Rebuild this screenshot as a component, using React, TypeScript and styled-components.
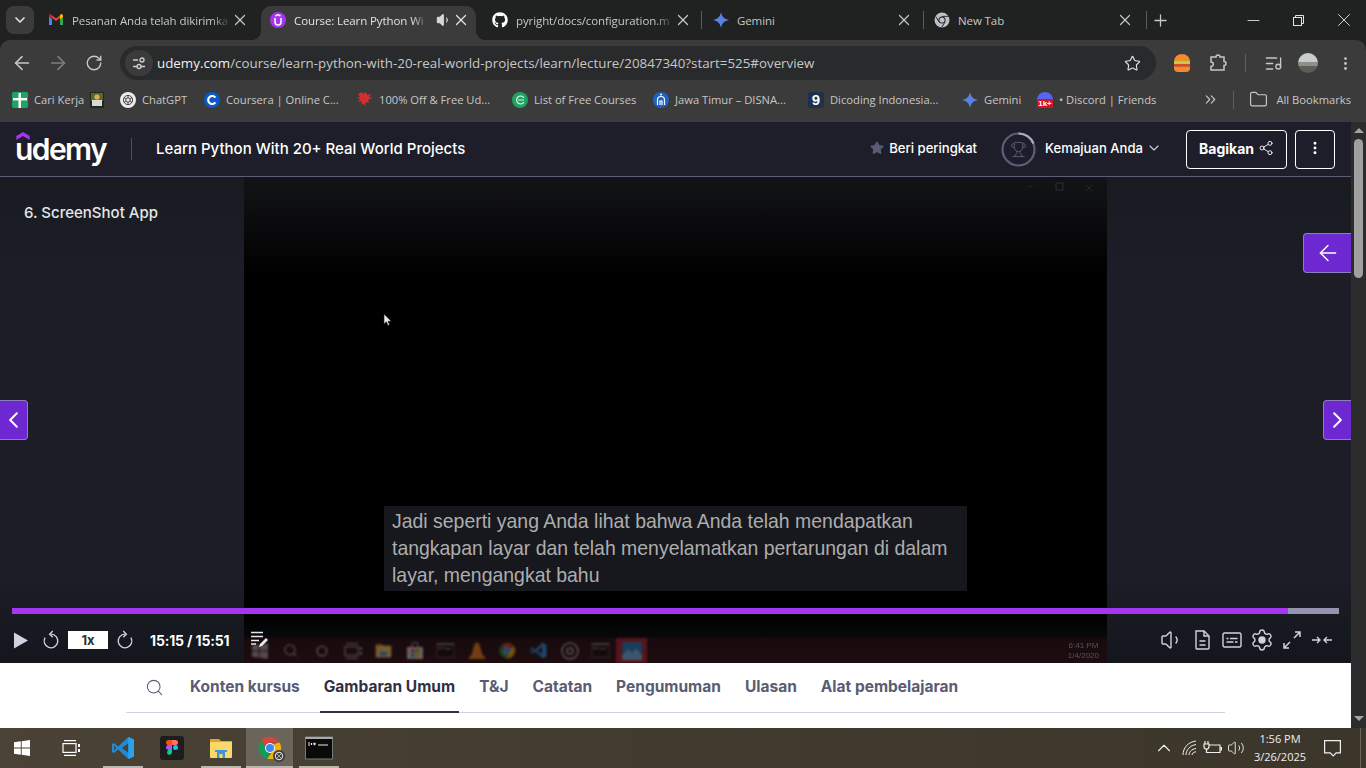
import styled, { createGlobalStyle } from "styled-components";
import {
  ArrowLeft,
  ArrowRight,
  ChevronDown,
  ChevronLeft,
  ChevronRight,
  ChevronUp,
  ChevronsRight,
  EllipsisVertical,
  Folder,
  ListMusic,
  Minus,
  Plus,
  RotateCw,
  Search,
  Settings,
  Share2,
  Star,
  Trophy,
  Volume1,
  Volume2,
  X,
} from "lucide-react";
import { FaGithub } from "react-icons/fa";

const GlobalStyle = createGlobalStyle`
  html, body {
    margin: 0;
    padding: 0;
    width: 1366px;
    height: 768px;
    overflow: hidden;
    background: #202121;
  }
  * { box-sizing: border-box; }
`;

const chromeFont = `"Open Sans", "Noto Sans", sans-serif`;
const udemyFont = `Inter, "Noto Sans", sans-serif`;

// Chrome window
const Screen = styled.div`
  width: 1366px;
  height: 768px;
  display: flex;
  flex-direction: column;
  font-family: ${chromeFont};
`;

const TabStrip = styled.div`
  height: 40px;
  flex: none;
  display: flex;
  align-items: flex-end;
  background: #202121;
  padding-left: 6px;
`;

const TabListButton = styled.div`
  width: 28px;
  height: 28px;
  margin: 0 7px 6px 0;
  border-radius: 8px;
  background: #3b3b3b;
  color: #e3e3e3;
  display: flex;
  align-items: center;
  justify-content: center;
`;

const Tab = styled.div<{ $w: number; $pad: number; $padR?: number; $active?: boolean }>`
  position: relative;
  width: ${(p) => p.$w}px;
  height: 34px;
  flex: none;
  display: flex;
  align-items: center;
  gap: 8px;
  padding: 0 ${(p) => p.$padR ?? 12}px 6px ${(p) => p.$pad}px;
  border-radius: 10px 10px 0 0;
  background: ${(p) => (p.$active ? "#3b3b3b" : "transparent")};
  color: ${(p) => (p.$active ? "#e3e3e3" : "#c7c7c7")};
  font-size: 11.5px;
  letter-spacing: -0.1px;

  ${(p) =>
    p.$active &&
    `
    &::before, &::after {
      content: "";
      position: absolute;
      bottom: 0;
      width: 10px;
      height: 10px;
    }
    &::before {
      left: -10px;
      background: radial-gradient(circle at 0 0, transparent 10px, #3b3b3b 10.5px);
    }
    &::after {
      right: -10px;
      background: radial-gradient(circle at 100% 0, transparent 10px, #3b3b3b 10.5px);
    }
  `}
`;

const TabTitle = styled.span<{ $fade?: boolean }>`
  flex: 1;
  min-width: 0;
  white-space: nowrap;
  ${(p) =>
    p.$fade &&
    `mask-image: linear-gradient(to right, #000 88%, transparent 100%);`}
`;

const TabClose = styled.span`
  width: 18px;
  height: 18px;
  flex: none;
  display: flex;
  margin-left: -8px;
`;

const TabAudio = styled.span`
  display: flex;
  color: #d8d8d8;
  svg {
    fill: currentColor;
  }
`;

const TabSep = styled.div<{ $ml?: number }>`
  width: 1px;
  height: 18px;
  flex: none;
  margin: 0 0 11px ${(p) => p.$ml ?? 0}px;
  background: #5a5c5e;
`;

const NewTab = styled.div`
  margin: 0 0 10px 4px;
  color: #c7c7c7;
  display: flex;
`;

const WindowButtons = styled.div`
  margin-left: auto;
  display: flex;
  align-self: flex-start;
  color: #e3e3e3;
`;

const WindowButton = styled.div`
  width: 45px;
  height: 40px;
  display: flex;
  align-items: center;
  justify-content: center;
`;

const Toolbar = styled.div`
  height: 42px;
  flex: none;
  display: flex;
  align-items: center;
  background: #3b3b3b;
  border-radius: 10px 10px 0 0;
  padding: 4px 0 0 4px;
  color: #c7c7c7;
`;

const NavIcon = styled.div<{ $dim?: boolean; $w?: number }>`
  width: ${(p) => p.$w ?? 36}px;
  height: 34px;
  flex: none;
  display: flex;
  align-items: center;
  justify-content: center;
  color: ${(p) => (p.$dim ? "#7d7f80" : "#c7c7c7")};
`;

const Omnibox = styled.div`
  width: 1036px;
  height: 34px;
  flex: none;
  margin: 0 8px 0 8px;
  padding: 0 15px 0 5px;
  border-radius: 17px;
  background: #282a2b;
  display: flex;
  align-items: center;
`;

const SiteInfo = styled.div`
  width: 28px;
  height: 26px;
  flex: none;
  border-radius: 13px;
  background: #3b3b3b;
  display: flex;
  align-items: center;
  justify-content: center;
  margin-right: 4px;
`;

const Url = styled.div`
  flex: 1;
  font-size: 13.35px;
  color: #c7c7c7;
  white-space: nowrap;
  b {
    font-weight: 400;
    color: #f0f0f0;
  }
`;

const ToolSep = styled.div`
  width: 1px;
  height: 18px;
  flex: none;
  background: #5f6061;
  margin: 0 9px;
`;

const Avatar = styled.div`
  width: 20px;
  height: 20px;
  border-radius: 50%;
  background: linear-gradient(#c9cdc9 0 45%, #8d908a 45% 65%, #5c5f57 65%);
`;

const Bookmarks = styled.div`
  height: 38px;
  flex: none;
  display: flex;
  align-items: center;
  background: #3b3b3b;
  padding: 0 15px 3px 12px;
  font-size: 11.2px;
  color: #c7c7c7;
`;

const Bookmark = styled.div<{ $w: number }>`
  width: ${(p) => p.$w}px;
  flex: none;
  display: flex;
  align-items: center;
  gap: 6px;
  white-space: nowrap;
`;

const BookmarkEnd = styled.div`
  margin-left: auto;
  display: flex;
  align-items: center;
  white-space: nowrap;
  gap: 8px;
`;

const BookmarkSep = styled.div`
  width: 1px;
  height: 18px;
  margin: 0 7px 0 6px;
  background: #5f6061;
`;

const Favicon = styled.span<{ $bg: string; $fg?: string; $square?: boolean }>`
  position: relative;
  width: 16px;
  height: 16px;
  flex: none;
  display: inline-flex;
  align-items: center;
  justify-content: center;
  border-radius: ${(p) => (p.$square ? "2px" : "50%")};
  background: ${(p) => p.$bg};
  color: ${(p) => p.$fg ?? "#fff"};
  font-family: "Liberation Sans", sans-serif;
  font-weight: 700;
  font-size: 15px;
  line-height: 1;
`;

const Line = styled.div`
  height: 2px;
  flex: none;
  background: #3b3b3b;
`;

// Page
const Viewport = styled.div`
  flex: 1;
  min-height: 0;
  display: flex;
`;

const Page = styled.div`
  width: 1351px;
  flex: none;
  display: flex;
  flex-direction: column;
  font-family: ${udemyFont};
`;

const Scrollbar = styled.div`
  flex: 1;
  background: #2c2c2c;
  display: flex;
  flex-direction: column;
  align-items: center;
  padding-top: 6px;
`;

const ScrollArrow = styled.div<{ $down?: boolean }>`
  width: 0;
  height: 0;
  border-left: 5px solid transparent;
  border-right: 5px solid transparent;
  ${(p) =>
    p.$down
      ? "border-top: 5px solid #a3a3a3; margin: auto 0 7px;"
      : "border-bottom: 5px solid #a3a3a3;"}
`;

const ScrollThumb = styled.div`
  width: 9px;
  height: 139px;
  margin-top: 6px;
  border-radius: 5px;
  background: #a0a0a0;
`;

const Header = styled.header`
  height: 55px;
  flex: none;
  display: flex;
  align-items: center;
  background: #1d1e29;
  border-bottom: 1px solid #5f5b78;
  padding: 0 16px;
  color: #fff;
`;

const Logo = styled.div`
  position: relative;
  width: 91px;
  height: 36px;
  flex: none;
  margin-left: -1px;
  margin-right: 1px;
  font-weight: 600;
  font-size: 30px;
  line-height: 36px;
  letter-spacing: -1.6px;

  svg {
    position: absolute;
    left: 1px;
    top: 1px;
  }
`;

const LogoSep = styled.div`
  width: 1px;
  height: 22px;
  flex: none;
  background: #4b4d60;
  margin: 0 24px;
`;

const CourseTitle = styled.div`
  padding-bottom: 2px;
  font-size: 15px;
  font-weight: 500;
`;

const HeaderRight = styled.div`
  margin-left: auto;
  display: flex;
  align-items: center;
  font-size: 13.1px;
  font-weight: 500;
`;

const RateLink = styled.div`
  display: flex;
  align-items: center;
  gap: 5px;
  margin-right: 24px;
  padding-bottom: 2px;
  color: #fff;
  svg {
    color: #595c73;
    fill: #595c73;
  }
`;

const ProgressRing = styled.div`
  position: relative;
  width: 35px;
  height: 35px;
  flex: none;
  margin-right: 9px;
  display: flex;
  align-items: center;
  justify-content: center;
  color: #595c73;
  svg:first-child {
    position: absolute;
    inset: 0;
  }
`;

const ProgressLink = styled.div`
  display: flex;
  align-items: center;
  gap: 3px;
  margin-right: 16px;
  padding-bottom: 2px;
`;

const OutlineButton = styled.div<{ $w: number }>`
  width: ${(p) => p.$w}px;
  height: 39px;
  flex: none;
  display: flex;
  align-items: center;
  justify-content: center;
  gap: 4px;
  padding-bottom: 2px;
  border: 1px solid #fff;
  border-radius: 4px;
  font-weight: 700;
  font-size: 14px;
  margin-left: 8px;
`;

const Player = styled.div`
  position: relative;
  height: 486px;
  flex: none;
  display: flex;
  overflow: hidden;
  background: #1d1e29;
`;

const SidePane = styled.div`
  width: 244px;
  flex: none;
  background: linear-gradient(
    #191b21 0,
    #1c1d27 90px,
    #1c1d27 400px,
    #14161c 100%
  );
`;

const SectionTitle = styled.div`
  padding: 26px 0 0 24px;
  font-size: 15px;
  font-weight: 500;
  color: #e6e6e6;
`;

const Video = styled.div`
  position: relative;
  flex: 1;
  display: flex;
  flex-direction: column;
  justify-content: flex-end;
  background: linear-gradient(#131417 0, #000 100px, #000 440px, #08090b 460px);
`;

const RecordedControls = styled.div`
  position: absolute;
  top: 5px;
  right: 3px;
  display: flex;
  color: #26272b;
`;

const RecordedButton = styled.div`
  width: 30px;
  display: flex;
  justify-content: center;
`;

const Cursor = styled.svg`
  position: absolute;
  left: 139px;
  top: 136px;
`;

const Caption = styled.div`
  position: absolute;
  left: 140px;
  top: 329px;
  width: 583px;
  height: 85px;
  padding: 2px 8px;
  background: #17181d;
  color: #adadad;
  font-family: "Liberation Sans", sans-serif;
  font-size: 19.44px;
  line-height: 27px;
  white-space: nowrap;
`;

const RecordedTaskbar = styled.div`
  height: 25px;
  flex: none;
  display: flex;
  align-items: center;
  position: relative;
  background: linear-gradient(#170a0d, #1e0c10);
`;

const RecordedIcons = styled.div`
  display: flex;
  align-items: center;
  height: 100%;
  filter: blur(0.8px);
  opacity: 0.4;
`;

const RecordedCell = styled.div<{ $active?: boolean }>`
  width: 31px;
  height: 100%;
  flex: none;
  display: flex;
  align-items: center;
  justify-content: center;
  color: #a8a8a8;
  background: ${(p) => (p.$active ? "#b0242b" : "transparent")};
`;

const RecordedClock = styled.div`
  margin-left: auto;
  margin-right: 8px;
  color: #55555a;
  font-family: "Liberation Sans", sans-serif;
  font-size: 8px;
  line-height: 10px;
  text-align: center;
  filter: blur(0.3px);
`;

const Controls = styled.div`
  position: absolute;
  left: 12px;
  bottom: 0;
  width: 1327px;
  height: 55px;
  display: flex;
  flex-direction: column;
`;

const ProgressTrack = styled.div`
  height: 6px;
  flex: none;
  background: #9194ac;
`;

const ProgressFill = styled.div`
  height: 100%;
  background: #a435f0;
`;

const ControlRow = styled.div`
  flex: 1;
  display: flex;
  align-items: center;
  gap: 8px;
  padding: 3px 2px 0;
  color: #d1d2e0;
`;

const PlayButton = styled.div`
  margin-right: 6px;
  display: flex;
`;

const RateBox = styled.div`
  width: 40px;
  height: 18px;
  flex: none;
  background: #fff;
  color: #2d2f31;
  font-size: 13px;
  font-weight: 700;
  display: flex;
  align-items: center;
  justify-content: center;
`;

const TimeText = styled.div`
  width: 81px;
  flex: none;
  margin: 0 11px 0 8px;
  font-size: 14px;
  font-weight: 700;
  color: #fff;
  letter-spacing: -0.15px;
  white-space: nowrap;
`;

const ControlRight = styled.div`
  margin-left: auto;
  display: flex;
  align-items: center;
`;

const ControlIcon = styled.div`
  width: 30px;
  height: 24px;
  display: flex;
  align-items: center;
  justify-content: center;
  svg circle {
    fill: currentColor;
  }
`;

const SideArrow = styled.div<{ $side: "left" | "right"; $top: number; $w: number }>`
  position: absolute;
  top: ${(p) => p.$top}px;
  ${(p) => p.$side}: 0;
  width: ${(p) => p.$w}px;
  height: 40px;
  background: #6d28d2;
  color: #fff;
  border: 1px solid #8e7dbc;
  border-${(p) => p.$side}: 0;
  border-radius: ${(p) => (p.$side === "left" ? "0 4px 4px 0" : "4px 0 0 4px")};
  display: flex;
  align-items: center;
  justify-content: center;
`;

const TabsSection = styled.div`
  flex: 1;
  background: #fff;
  padding: 0 126px;
`;

const CourseTabs = styled.nav`
  height: 50px;
  display: flex;
  gap: 16px;
  padding-left: 22px;
  border-bottom: 1px solid #d1d2e0;
`;

const SearchButton = styled.div`
  width: 22px;
  display: flex;
  align-items: center;
  color: #595c73;
  svg {
    flex: none;
    margin-left: -3px;
  }
`;

const CourseTab = styled.div<{ $active?: boolean }>`
  height: 50px;
  padding: 0 4px 1px;
  display: flex;
  align-items: center;
  white-space: nowrap;
  font-size: 15.5px;
  font-weight: 700;
  color: ${(p) => (p.$active ? "#303141" : "#595c73")};
  border-bottom: 2px solid ${(p) => (p.$active ? "#303141" : "transparent")};
`;

// Windows taskbar
const Taskbar = styled.div`
  height: 40px;
  flex: none;
  display: flex;
  align-items: center;
  background: linear-gradient(to right, #4a4335, #423c2f 45%, #3b3629);
  font-family: ${chromeFont};
  color: #fff;
`;

const StartButton = styled.div<{ $w: number }>`
  width: ${(p) => p.$w}px;
  height: 40px;
  flex: none;
  display: flex;
  align-items: center;
  justify-content: center;
`;

const AppButton = styled.div<{ $open?: boolean; $active?: boolean }>`
  position: relative;
  width: 47px;
  height: 40px;
  margin: 0 1px;
  flex: none;
  display: flex;
  align-items: center;
  justify-content: center;
  background: ${(p) => (p.$active ? "#6a6558" : "transparent")};

  ${(p) =>
    p.$open &&
    `&::after {
      content: "";
      position: absolute;
      left: ${p.$active ? 0 : 4}px;
      right: ${p.$active ? 0 : 3}px;
      bottom: 0;
      height: 2px;
      background: #b9b7b1;
    }`}
`;

const Tray = styled.div`
  margin-left: auto;
  display: flex;
  align-items: center;
  height: 100%;
  padding-right: 5px;
  color: #f0f0f0;
`;

const TrayIcon = styled.div<{ $w: number }>`
  width: ${(p) => p.$w}px;
  display: flex;
  justify-content: center;
`;

const Clock = styled.div`
  width: 60px;
  margin-left: 2px;
  text-align: center;
  font-size: 11px;
  line-height: 18px;
  white-space: nowrap;
`;

const Notify = styled.div`
  width: 30px;
  margin: 0 13px 0 7px;
  display: flex;
  justify-content: center;
`;

const ShowDesktop = styled.div`
  width: 1px;
  height: 100%;
  background: #69655b;
`;

const Badge = styled.span`
  position: absolute;
  left: 0;
  right: 0;
  bottom: 0;
  height: 9px;
  border-radius: 2px;
  background: #d3141f;
  color: #fff;
  font-size: 8px;
  line-height: 9px;
  text-align: center;
`;

const ChromeBadge = styled.span`
  position: relative;
  width: 24px;
  height: 24px;
  display: inline-flex;
  svg + svg {
    position: absolute;
    right: -3px;
    bottom: -2px;
  }
`;

// Icons
const GmailIcon = () => (
  <svg width="16" height="16" viewBox="0 0 16 16">
    <path d="M1 4v9h3V7z" fill="#4285f4" />
    <path d="M12 7v6h3V4z" fill="#34a853" />
    <path d="M1 3.5 8 9l7-5.5-1.5-1.2L8 6.5 2.5 2.3z" fill="#ea4335" />
    <path d="M12 3.8v3.6l3-2.6V4c0-1.4-1.6-2.2-2.7-1.3z" fill="#fbbc04" />
    <path d="M1 4.8 4 7.4V3.8L2.7 2.7C1.6 1.8 1 2.6 1 4z" fill="#c5221f" />
  </svg>
);

const UdemyFavicon = () => (
  <Favicon $bg="#a435f0">
    <svg width="10" height="12" viewBox="0 0 10 12" fill="none" stroke="#fff" strokeWidth="1.5">
      <path d="M2 4v4a3 3 0 0 0 6 0V4" />
      <path d="M2.5 2 5 .7 7.5 2" />
    </svg>
  </Favicon>
);

const GeminiIcon = ({ id }: { id: string }) => (
  <svg width="16" height="16" viewBox="0 0 16 16">
    <defs>
      <linearGradient id={id} x1="0" y1="1" x2="1" y2="0">
        <stop offset="0" stopColor="#4f8ee8" />
        <stop offset="0.6" stopColor="#5b7fe0" />
        <stop offset="1" stopColor="#9a7fd8" />
      </linearGradient>
    </defs>
    <path d="M8 0c.6 4.4 3.2 7.2 8 8-4.8.8-7.4 3.6-8 8-.6-4.4-3.2-7.2-8-8 4.8-.8 7.4-3.6 8-8z" fill={`url(#${id})`} />
  </svg>
);

const GrayChromeIcon = () => (
  <svg width="16" height="16" viewBox="0 0 16 16">
    <circle cx="8" cy="8" r="7.5" fill="#bdc1c6" />
    <circle cx="8" cy="8" r="3.6" fill="#202121" />
    <circle cx="8" cy="8" r="2.6" fill="#bdc1c6" />
    <path d="M8 4.4h6.5M5 10 1.8 4.6M11 10l-3.2 5.2" stroke="#202121" strokeWidth="0.9" />
  </svg>
);

const ChromeIcon = ({ size = 24 }: { size?: number }) => (
  <svg width={size} height={size} viewBox="0 0 24 24">
    <path d="M12 1a11 11 0 0 1 9.5 5.5H12a5.5 5.5 0 0 0-5 3.2L3.2 4.7A11 11 0 0 1 12 1z" fill="#db4437" />
    <path d="M3.2 4.7 7 11c.2 3 2.4 5.5 5.5 5.5l-3.2 6.2A11 11 0 0 1 3.2 4.7z" fill="#0f9d58" />
    <path d="M21.5 6.5A11 11 0 0 1 9.3 22.7l4.7-6.6A5.5 5.5 0 0 0 16 8l5.5-1.5z" fill="#f4b400" />
    <circle cx="12" cy="12" r="5" fill="#fff" />
    <circle cx="12" cy="12" r="4" fill="#4285f4" />
  </svg>
);

const ChromeWithBadge = () => (
  <ChromeBadge>
    <ChromeIcon />
    <svg width="12" height="12" viewBox="0 0 12 12">
      <circle cx="6" cy="6" r="6" fill="#3a3a3a" />
      <circle cx="6" cy="6" r="3.6" fill="none" stroke="#d5d5d5" strokeWidth="1.2" />
      <path d="M3.5 8.5 8.5 3.5M3.5 3.5l5 5" stroke="#d5d5d5" strokeWidth="0.7" />
    </svg>
  </ChromeBadge>
);

const VsCodeIcon = ({ size = 24 }: { size?: number }) => (
  <svg width={size} height={size} viewBox="0 0 24 24">
    <path
      fillRule="evenodd"
      d="M17.3 1 7.2 10.4 2.9 7.1 1 8.1v7.8l1.9 1 4.3-3.3L17.3 23l5.7-2.4V3.4zM17.3 7.2v9.6L11 12zM3 9.5 5.3 12 3 14.5z"
      fill="#1f8ad8"
    />
    <path d="M17.3 1 23 3.4v17.2L17.3 23z" fill="#2aa3ef" />
  </svg>
);

const BurgerIcon = () => (
  <svg width="18" height="20" viewBox="0 0 18 20">
    <path d="M1 8a8 7 0 0 1 16 0z" fill="#f28a2e" />
    <rect x="1" y="8" width="16" height="3" fill="#b7d24a" />
    <rect x="1" y="11" width="16" height="2.5" fill="#d9472b" />
    <path d="M1 13.5h16v1.5a4 4 0 0 1-4 4H5a4 4 0 0 1-4-4z" fill="#f28a2e" />
  </svg>
);

const TuneIcon = () => (
  <svg width="14" height="14" viewBox="0 0 14 14" fill="none" stroke="#d0d0d0" strokeWidth="1.3">
    <path d="M1 4h5M1 10.5h4M8.5 10.5H13" />
    <circle cx="10" cy="4" r="2" />
    <circle cx="7" cy="10.5" r="2" />
  </svg>
);

const ExtensionIcon = () => (
  <svg width="18" height="18" viewBox="0 0 18 18" fill="none" stroke="currentColor" strokeWidth="1.5">
    <path d="M2 3h5a2 2 0 0 1 4 0h4v4.5a2 2 0 0 1 0 4V16H2v-3.5a2.3 2.3 0 0 0 0-4.6z" />
  </svg>
);

const CariKerjaThumb = () => (
  <svg width="14" height="16" viewBox="0 0 14 16">
    <rect width="14" height="16" fill="#1c2a1c" />
    <rect x="1" y="1" width="12" height="8" fill="#57692c" />
    <circle cx="7" cy="5" r="2.6" fill="#e0b050" />
    <rect x="2" y="8" width="10" height="6" fill="#d8d8d8" />
  </svg>
);

const SheetCross = () => (
  <svg width="16" height="16" viewBox="0 0 16 16" fill="#fff">
    <rect x="6.5" y="1" width="2.4" height="15" />
    <rect x="1" y="6" width="14" height="2.4" />
  </svg>
);

const RedDragon = () => (
  <svg width="16" height="17" viewBox="0 0 16 17" fill="#d32f2f">
    <path d="M1 3l4-2 1 2 3-2 1 3 4-1-2 3 3 1-4 2 1 3-3-1-1 4-2-3-1 2-1-4-3 1 2-3-3-1 3-1z" />
  </svg>
);

const ListCourseIcon = () => (
  <Favicon $bg="#1ea362">
    <svg width="10" height="10" viewBox="0 0 10 10" fill="none" stroke="#d7f5e4" strokeWidth="1.2">
      <path d="M9 3A4 4 0 1 0 9 7M3 5h6" />
    </svg>
  </Favicon>
);

const ChatGptIcon = () => (
  <Favicon $bg="#ececec">
    <svg width="12" height="12" viewBox="0 0 12 12" fill="none" stroke="#333" strokeWidth="0.9">
      <circle cx="6" cy="6" r="4.6" />
      <circle cx="6" cy="6" r="2.2" />
      <path d="M6 1.4v2.4M2 3.7l2 1.2M2 8.3l2-1.2M6 10.6V8.2M10 8.3 8 7.1M10 3.7 8 4.9" />
    </svg>
  </Favicon>
);

const CourseraIcon = () => (
  <Favicon $bg="#0a58ca">
    <svg width="10" height="10" viewBox="0 0 10 10" fill="none" stroke="#fff" strokeWidth="2.2">
      <path d="M8.4 2.6a4 4 0 1 0 0 4.8" />
    </svg>
  </Favicon>
);

const JawaIcon = () => (
  <Favicon $bg="#1e63c4">
    <svg width="10" height="13" viewBox="0 0 10 13" fill="none" stroke="#fff" strokeWidth="1.2">
      <path d="M1.5 12V7a3.5 3.5 0 0 1 7 0v5M4 12V8h2v4" />
      <circle cx="5" cy="1.6" r="1" fill="#fff" stroke="none" />
    </svg>
  </Favicon>
);

const DiscordBadge = () => (
  <Favicon $bg="#5865f2">
    <Badge>1k+</Badge>
  </Favicon>
);

const RewindIcon = ({ flip }: { flip?: boolean }) => (
  <svg
    width="18"
    height="22"
    viewBox="0 0 20 22"
    fill="none"
    stroke="currentColor"
    strokeWidth="1.5"
    transform={flip ? "scale(-1 1)" : undefined}
  >
    <path d="M10 4.5a7.6 7.6 0 1 1-6.6 3.8" />
    <path d="M12 1 8.4 4.5 12 8" />
  </svg>
);

const NotesIcon = () => (
  <svg width="20" height="20" viewBox="0 0 20 20" fill="none" stroke="#e8e8f0" strokeWidth="1.6">
    <path d="M1 2.5h12M1 6.5h12M1 10.5h8M1 14h5" />
    <path d="M9 17l1-3 6-6 2 2-6 6z" fill="#e8e8f0" stroke="none" />
  </svg>
);

const DocIcon = () => (
  <svg width="17" height="20" viewBox="0 0 17 20" fill="none" stroke="currentColor" strokeWidth="1.4">
    <path d="M2 1h8l5 5v12a1 1 0 0 1-1 1H3a1 1 0 0 1-1-1z" />
    <path d="M10 1v5h5M5.5 11h6M5.5 15h6" />
  </svg>
);

const CaptionsIcon = () => (
  <svg width="20" height="16" viewBox="0 0 20 16" fill="none" stroke="currentColor" strokeWidth="1.4">
    <rect x="1" y="1" width="18" height="14" rx="1.5" />
    <path d="M4.5 6.5h2M8 6.5h7.5M4.5 10h7M13 10h2.5" />
  </svg>
);

const FullscreenIcon = () => (
  <svg width="20" height="20" viewBox="0 0 20 20" fill="none" stroke="currentColor" strokeWidth="1.5">
    <path d="M12 8l6-6M13 2h5v5M8 12l-6 6M2 13v5h5" />
  </svg>
);

const CollapseIcon = () => (
  <svg width="20" height="10" viewBox="0 0 20 10" fill="none" stroke="currentColor" strokeWidth="1.4">
    <path d="M0 5h8M5 2l3 3-3 3M20 5h-8M15 2l-3 3 3 3" />
  </svg>
);

const StartIcon = () => (
  <svg width="16" height="16" viewBox="0 0 16 16" fill="currentColor">
    <path d="M0 2.3 6.8 1.3v6.2H0zM7.7 1.2 16 0v7.5H7.7zM0 8.4h6.8v6.3L0 13.7zM7.7 8.4H16V16l-8.3-1.2z" />
  </svg>
);

const TaskViewIcon = () => (
  <svg width="18" height="16" viewBox="0 0 18 16" fill="none" stroke="currentColor" strokeWidth="1.2">
    <path d="M2 .6h12M2 15.4h12" />
    <rect x="1" y="3.6" width="13" height="8.8" />
    <path d="M17 4v3M17 9v3" strokeWidth="2" />
  </svg>
);

const FigmaIcon = () => (
  <svg width="24" height="24" viewBox="0 0 24 24">
    <rect width="24" height="24" rx="3" fill="#1d1d1d" />
    <path d="M8.5 4h3.5v5H8.5a2.5 2.5 0 0 1 0-5z" fill="#f24e1e" />
    <path d="M12 4h3.5a2.5 2.5 0 0 1 0 5H12z" fill="#ff7262" />
    <path d="M8.5 9H12v5H8.5a2.5 2.5 0 0 1 0-5z" fill="#a259ff" />
    <circle cx="15.5" cy="11.5" r="2.5" fill="#1abcfe" />
    <path d="M8.5 14H12v2.5a2.5 2.5 0 1 1-3.5-2.5z" fill="#0acf83" />
  </svg>
);

const ExplorerIcon = ({ size = 24 }: { size?: number }) => (
  <svg width={size} height={size} viewBox="0 0 24 24">
    <path d="M1 3h9l2 2h11v4H1z" fill="#e0a526" />
    <rect x="1" y="6" width="22" height="16" rx="1" fill="#fbd869" />
    <path d="M8 22v-7h8v7h-2.5v-4h-3v4z" fill="#3f95dd" />
    <rect x="6" y="14" width="12" height="2" fill="#3f95dd" />
  </svg>
);

const CmdIcon = ({ size = 20 }: { size?: number }) => (
  <svg width={size + 4} height={size} viewBox="0 0 28 24">
    <rect x="0.5" y="1" width="27" height="22" fill="#0a0a0a" stroke="#7a7a7a" />
    <rect x="0.5" y="1" width="27" height="2" fill="#a9a9a9" />
    <path d="M3 7h2M3 9h2M6.5 7v2M8.5 7l2 2M8.5 9l2-2M13 9h10" stroke="#e8e8e8" strokeWidth="1.2" />
  </svg>
);

const StoreIcon = () => (
  <svg width="18" height="18" viewBox="0 0 18 18">
    <path d="M6 5V3a3 3 0 0 1 6 0v2" fill="none" stroke="#ddd" />
    <rect x="1" y="5" width="16" height="12" fill="#ddd" />
    <rect x="5" y="7" width="3.5" height="3.5" fill="#e04a2f" />
    <rect x="9.5" y="7" width="3.5" height="3.5" fill="#7fba00" />
    <rect x="5" y="11.5" width="3.5" height="3.5" fill="#2b9de0" />
    <rect x="9.5" y="11.5" width="3.5" height="3.5" fill="#fdb900" />
  </svg>
);

const VlcIcon = () => (
  <svg width="18" height="18" viewBox="0 0 18 18" fill="#f48a14">
    <path d="M7 1h4l4 13H3z" />
    <rect x="1" y="14" width="16" height="3" rx="1" />
  </svg>
);

const ObsIcon = () => (
  <svg width="18" height="18" viewBox="0 0 18 18" fill="none" stroke="#bbb" strokeWidth="1.5">
    <circle cx="9" cy="9" r="8" />
    <circle cx="9" cy="9" r="3" />
  </svg>
);

const PhotoIcon = () => (
  <svg width="20" height="18" viewBox="0 0 20 18">
    <rect width="20" height="18" fill="#1c87d8" />
    <path d="M0 14 6 7l4 4 4-5 6 7v5H0z" fill="#71c6f4" />
  </svg>
);

const WifiIcon = () => (
  <svg width="16" height="16" viewBox="0 0 16 16" fill="none" stroke="currentColor" strokeWidth="1">
    <path d="M1 15C1 8 6 2 14 1M4 15c0-5 4-9.5 10-10.5M7 15c0-3 2.5-6 7-6.5M10 15c0-1.5 1.5-3 4-3.2" />
  </svg>
);

const PlugIcon = () => (
  <svg width="19" height="16" viewBox="0 0 19 16" fill="none" stroke="currentColor" strokeWidth="1.2">
    <path d="M2 1v3M5 1v3M1 4h5v2.5a2.5 2.5 0 0 1-5 0zM3.5 9v4" />
    <path d="M6 5h11v7.5H3.5M17 7.5h1.5v2.5H17" />
  </svg>
);

const NotifyIcon = () => (
  <svg width="17" height="17" viewBox="0 0 17 17" fill="none" stroke="currentColor" strokeWidth="1.2">
    <path d="M.6.6h15.8v12.2h-4.2l-3 3-3-3H.6z" />
  </svg>
);

const tabs = [
  { w: 220, pad: 7, padR: 12, title: "Pesanan Anda telah dikirimka", icon: <GmailIcon />, fade: true },
  { w: 215, pad: 9, padR: 6, title: "Course: Learn Python Wi", icon: <UdemyFavicon />, fade: true, active: true },
  { w: 222, pad: 16, padR: 6, title: "pyright/docs/configuration.m", icon: <FaGithub size={16} color="#fff" />, fade: true },
];

const bookmarks = [
  { w: 108, icon: <Favicon $bg="#1ea362" $square><SheetCross /></Favicon>, label: "Cari Kerja", extra: <CariKerjaThumb /> },
  { w: 84, icon: <ChatGptIcon />, label: "ChatGPT" },
  { w: 153, icon: <CourseraIcon />, label: "Coursera | Online C..." },
  { w: 155, icon: <RedDragon />, label: "100% Off & Free Ud..." },
  { w: 141, icon: <ListCourseIcon />, label: "List of Free Courses" },
  { w: 155, icon: <JawaIcon />, label: "Jawa Timur – DISNA..." },
  { w: 154, icon: <Favicon $bg="#21304a" $square>9</Favicon>, label: "Dicoding Indonesia..." },
  { w: 75, icon: <GeminiIcon id="gemBookmark" />, label: "Gemini" },
  { w: 160, icon: <DiscordBadge />, label: "• Discord | Friends" },
];

const courseTabs = ["Konten kursus", "Gambaran Umum", "T&J", "Catatan", "Pengumuman", "Ulasan", "Alat pembelajaran"];

const recordedApps = [
  <StartIcon key="start" />,
  <Search key="search" size={15} />,
  <svg key="cortana" width="12" height="12" viewBox="0 0 12 12" fill="none" stroke="currentColor" strokeWidth="1.6"><circle cx="6" cy="6" r="4.8" /></svg>,
  <TaskViewIcon key="task" />,
  <ExplorerIcon key="explorer" size={17} />,
  <StoreIcon key="store" />,
  <CmdIcon key="terminal" size={15} />,
  <VlcIcon key="vlc" />,
  <ChromeIcon key="chrome" size={17} />,
  <VsCodeIcon key="vscode" size={17} />,
  <ObsIcon key="obs" />,
  <CmdIcon key="cmd" size={15} />,
];

const App = () => {
  const watched = (1276 / 1327) * 100;

  return (
    <Screen>
      <GlobalStyle />
      <TabStrip>
        <TabListButton>
          <ChevronDown size={16} strokeWidth={2.5} />
        </TabListButton>
        {tabs.map((tab) => (
          <Tab key={tab.title} $w={tab.w} $pad={tab.pad} $padR={tab.padR} $active={tab.active}>
            {tab.icon}
            <TabTitle $fade={tab.fade}>{tab.title}</TabTitle>
            {tab.active && (
              <TabAudio>
                <Volume1 size={16} strokeWidth={1.6} />
              </TabAudio>
            )}
            <TabClose>
              <X size={18} strokeWidth={1.6} />
            </TabClose>
          </Tab>
        ))}
        <TabSep $ml={3} />
        <Tab $w={217} $pad={11} $padR={6}>
          <GeminiIcon id="gemTab" />
          <TabTitle>Gemini</TabTitle>
          <TabClose>
            <X size={18} strokeWidth={1.6} />
          </TabClose>
        </Tab>
        <TabSep $ml={4} />
        <Tab $w={222} $pad={10}>
          <GrayChromeIcon />
          <TabTitle>New Tab</TabTitle>
          <TabClose>
            <X size={18} strokeWidth={1.6} />
          </TabClose>
        </Tab>
        <TabSep />
        <NewTab>
          <Plus size={19} strokeWidth={1.6} />
        </NewTab>
        <WindowButtons>
          <WindowButton>
            <Minus size={19} strokeWidth={1.1} />
          </WindowButton>
          <WindowButton>
            <svg width="11" height="11" viewBox="0 0 11 11" fill="none" stroke="currentColor">
              <rect x="0.5" y="2.5" width="8" height="8" />
              <path d="M2.5 2.5v-2h8v8h-2" />
            </svg>
          </WindowButton>
          <WindowButton>
            <X size={22} strokeWidth={1} />
          </WindowButton>
        </WindowButtons>
      </TabStrip>

      <Toolbar>
        <NavIcon>
          <ArrowLeft size={22} strokeWidth={1.7} />
        </NavIcon>
        <NavIcon $dim>
          <ArrowRight size={22} strokeWidth={1.7} />
        </NavIcon>
        <NavIcon>
          <RotateCw size={18} strokeWidth={1.8} />
        </NavIcon>
        <Omnibox>
          <SiteInfo>
            <TuneIcon />
          </SiteInfo>
          <Url>
            <b>udemy.com</b>/course/learn-python-with-20-real-world-projects/learn/lecture/20847340?start=525#overview
          </Url>
          <Star size={17} color="#e3e3e3" strokeWidth={1.6} />
        </Omnibox>
        <NavIcon $w={36}>
          <BurgerIcon />
        </NavIcon>
        <NavIcon $w={36}>
          <ExtensionIcon />
        </NavIcon>
        <ToolSep />
        <NavIcon $w={36}>
          <ListMusic size={19} strokeWidth={1.7} />
        </NavIcon>
        <NavIcon $w={34}>
          <Avatar />
        </NavIcon>
        <NavIcon $w={40}>
          <EllipsisVertical size={17} />
        </NavIcon>
      </Toolbar>

      <Bookmarks>
        {bookmarks.map((b) => (
          <Bookmark key={b.label} $w={b.w}>
            {b.icon}
            <span>{b.label}</span>
            {b.extra}
          </Bookmark>
        ))}
        <BookmarkEnd>
          <ChevronsRight size={17} strokeWidth={1.6} />
          <BookmarkSep />
          <Folder size={19} strokeWidth={1.5} />
          <span>All Bookmarks</span>
        </BookmarkEnd>
      </Bookmarks>
      <Line />

      <Viewport>
        <Page>
          <Header>
            <Logo>
              <svg width="14" height="8" viewBox="0 0 15 9" fill="#a435f0">
                <path d="M7.5 0 15 4.4V9L7.5 4.6 0 9V4.4z" />
              </svg>
              udemy
            </Logo>
            <LogoSep />
            <CourseTitle>Learn Python With 20+ Real World Projects</CourseTitle>
            <HeaderRight>
              <RateLink>
                <Star size={14} />
                Beri peringkat
              </RateLink>
              <ProgressRing>
                <svg width="35" height="35" viewBox="0 0 35 35" fill="none" strokeWidth="2.2">
                  <circle cx="17.5" cy="17.5" r="16" stroke="#5c5f7a" />
                  <path d="M17.5 1.5a16 16 0 0 1 15 10" stroke="#a9abc4" />
                </svg>
                <Trophy size={17} strokeWidth={1.4} />
              </ProgressRing>
              <ProgressLink>
                Kemajuan Anda
                <ChevronDown size={16} strokeWidth={1.6} color="#d1d2e0" />
              </ProgressLink>
              <OutlineButton $w={101}>
                Bagikan
                <Share2 size={16} strokeWidth={1.3} />
              </OutlineButton>
              <OutlineButton $w={40}>
                <EllipsisVertical size={16} strokeWidth={2.4} />
              </OutlineButton>
            </HeaderRight>
          </Header>

          <Player>
            <SidePane>
              <SectionTitle>6. ScreenShot App</SectionTitle>
            </SidePane>
            <Video>
              <RecordedControls>
                <RecordedButton>
                  <Minus size={9} />
                </RecordedButton>
                <RecordedButton>
                  <svg width="9" height="9" viewBox="0 0 9 9" fill="none" stroke="currentColor" strokeWidth="1.5">
                    <rect x="1" y="1" width="7" height="7" rx="1" />
                  </svg>
                </RecordedButton>
                <RecordedButton>
                  <X size={12} />
                </RecordedButton>
              </RecordedControls>
              <Cursor width="9" height="14" viewBox="0 0 9 14">
                <path d="M1 1v10l2.4-2.2L5 12.5l1.6-.7L5 8.3h3.2z" fill="#e8e8e8" stroke="#222" strokeWidth="0.6" />
              </Cursor>
              <Caption>
                Jadi seperti yang Anda lihat bahwa Anda telah mendapatkan
                <br />
                tangkapan layar dan telah menyelamatkan pertarungan di dalam
                <br />
                layar, mengangkat bahu
              </Caption>
              <RecordedTaskbar>
                <RecordedIcons>
                  {recordedApps.map((app) => (
                    <RecordedCell key={app.key}>{app}</RecordedCell>
                  ))}
                  <RecordedCell $active>
                    <PhotoIcon />
                  </RecordedCell>
                </RecordedIcons>
                <RecordedClock>
                  6:41 PM
                  <br />
                  1/4/2020
                </RecordedClock>
              </RecordedTaskbar>
            </Video>
            <SidePane />

            <Controls>
              <ProgressTrack>
                <ProgressFill style={{ width: `${watched}%` }} />
              </ProgressTrack>
              <ControlRow>
                <PlayButton>
                  <svg width="14" height="17" viewBox="0 0 15 17" fill="currentColor">
                    <path d="M0 0 15 8.5 0 17z" />
                  </svg>
                </PlayButton>
                <RewindIcon />
                <RateBox>1x</RateBox>
                <RewindIcon flip />
                <TimeText>15:15 / 15:51</TimeText>
                <NotesIcon />
                <ControlRight>
                  <ControlIcon>
                    <Volume1 size={24} strokeWidth={1.4} />
                  </ControlIcon>
                  <ControlIcon>
                    <DocIcon />
                  </ControlIcon>
                  <ControlIcon>
                    <CaptionsIcon />
                  </ControlIcon>
                  <ControlIcon>
                    <Settings size={24} strokeWidth={1.4} />
                  </ControlIcon>
                  <ControlIcon>
                    <FullscreenIcon />
                  </ControlIcon>
                  <ControlIcon>
                    <CollapseIcon />
                  </ControlIcon>
                </ControlRight>
              </ControlRow>
            </Controls>

            <SideArrow $side="right" $top={56} $w={48}>
              <ArrowLeft size={26} strokeWidth={1.3} />
            </SideArrow>
            <SideArrow $side="left" $top={223} $w={28}>
              <ChevronLeft size={28} strokeWidth={1.7} />
            </SideArrow>
            <SideArrow $side="right" $top={223} $w={28}>
              <ChevronRight size={28} strokeWidth={1.7} />
            </SideArrow>
          </Player>

          <TabsSection>
            <CourseTabs>
              <SearchButton>
                <Search size={19} strokeWidth={1.3} />
              </SearchButton>
              {courseTabs.map((name) => (
                <CourseTab key={name} $active={name === "Gambaran Umum"}>
                  {name}
                </CourseTab>
              ))}
            </CourseTabs>
          </TabsSection>
        </Page>
        <Scrollbar>
          <ScrollArrow />
          <ScrollThumb />
          <ScrollArrow $down />
        </Scrollbar>
      </Viewport>

      <Taskbar>
        <StartButton $w={44}>
          <StartIcon />
        </StartButton>
        <StartButton $w={54}>
          <TaskViewIcon />
        </StartButton>
        <AppButton $open>
          <VsCodeIcon />
        </AppButton>
        <AppButton>
          <FigmaIcon />
        </AppButton>
        <AppButton $open>
          <ExplorerIcon />
        </AppButton>
        <AppButton $open $active>
          <ChromeWithBadge />
        </AppButton>
        <AppButton $open>
          <CmdIcon size={24} />
        </AppButton>
        <Tray>
          <TrayIcon $w={32}>
            <ChevronUp size={22} strokeWidth={1.2} />
          </TrayIcon>
          <TrayIcon $w={20}>
            <WifiIcon />
          </TrayIcon>
          <TrayIcon $w={24}>
            <PlugIcon />
          </TrayIcon>
          <TrayIcon $w={24}>
            <Volume2 size={18} strokeWidth={1.2} />
          </TrayIcon>
          <Clock>
            1:56 PM
            <br />
            3/26/2025
          </Clock>
          <Notify>
            <NotifyIcon />
          </Notify>
          <ShowDesktop />
        </Tray>
      </Taskbar>
    </Screen>
  );
};

export default App;
